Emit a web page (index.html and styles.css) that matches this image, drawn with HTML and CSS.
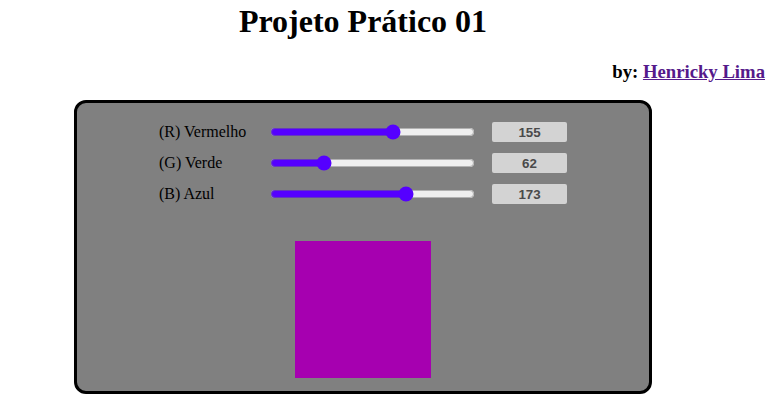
FILE: index.html
```html
<!DOCTYPE html>
<html>
  <head>
    <title>Projeto Prático 01</title>
    <meta charset="UTF-8">
    <link rel="stylesheet" href="styles.css">
  </head>
  <body>
    <header class="top">
      <h1 class="title">Projeto Prático 01</h1>
      <h3 class="author">by: <a href="#">Henricky Lima</a></h3>
    </header>
    <main class="panel">
      <div class="controls">
        <label class="row">
          <span class="name">(R) Vermelho</span>
          <input type="range" class="slider" id="red" min="0" max="255" value="155">
          <input type="text" class="value" id="redValue" value="155" disabled>
        </label>
        <label class="row">
          <span class="name">(G) Verde</span>
          <input type="range" class="slider" id="green" min="0" max="255" value="62">
          <input type="text" class="value" id="greenValue" value="62" disabled>
        </label>
        <label class="row">
          <span class="name">(B) Azul</span>
          <input type="range" class="slider" id="blue" min="0" max="255" value="173">
          <input type="text" class="value" id="blueValue" value="173" disabled>
        </label>
      </div>
      <div class="swatch" id="swatch"></div>
    </main>
  </body>
</html>
```

FILE: styles.css
```css
body {
  margin: 0;
  font-family: 'Liberation Serif', serif;
  background: white;
  color: black;
}
.top {
  width: 726px;
  position: relative;
}
.title {
  margin: 0;
  padding-top: 3px;
  font-size: 32px;
  text-align: center;
}
.author {
  margin: 21px 0 0;
  width: 765px;
  font-size: 18.72px;
  text-align: right;
}
.author a {
  color: #551a8b;
}
.panel {
  box-sizing: border-box;
  margin: 17px 0 0 74px;
  width: 578px;
  height: 294px;
  border: 3px solid black;
  border-radius: 12px;
  background: #808080;
  padding: 19px 0 0 82px;
}
.controls {
  display: flex;
  flex-direction: column;
  gap: 11px;
}
.row {
  display: flex;
  align-items: center;
  height: 20px;
  font-size: 16px;
}
.name {
  width: 110px;
}
.slider {
  margin: 0 2px 0 1px;
  width: 205px;
  accent-color: #5500ff;
}
.value {
  margin-left: 15px;
  box-sizing: border-box;
  width: 75px;
  height: 20px;
  border: none;
  border-radius: 2px;
  background: #d3d3d3;
  color: #4a4a4a;
  font-family: 'Liberation Sans', sans-serif;
  font-size: 13.33px;
  font-weight: bold;
  text-align: center;
  padding: 0;
}
.swatch {
  width: 136px;
  height: 137px;
  margin: 37px 0 0 136px;
  background: #a600b0;
}
```
